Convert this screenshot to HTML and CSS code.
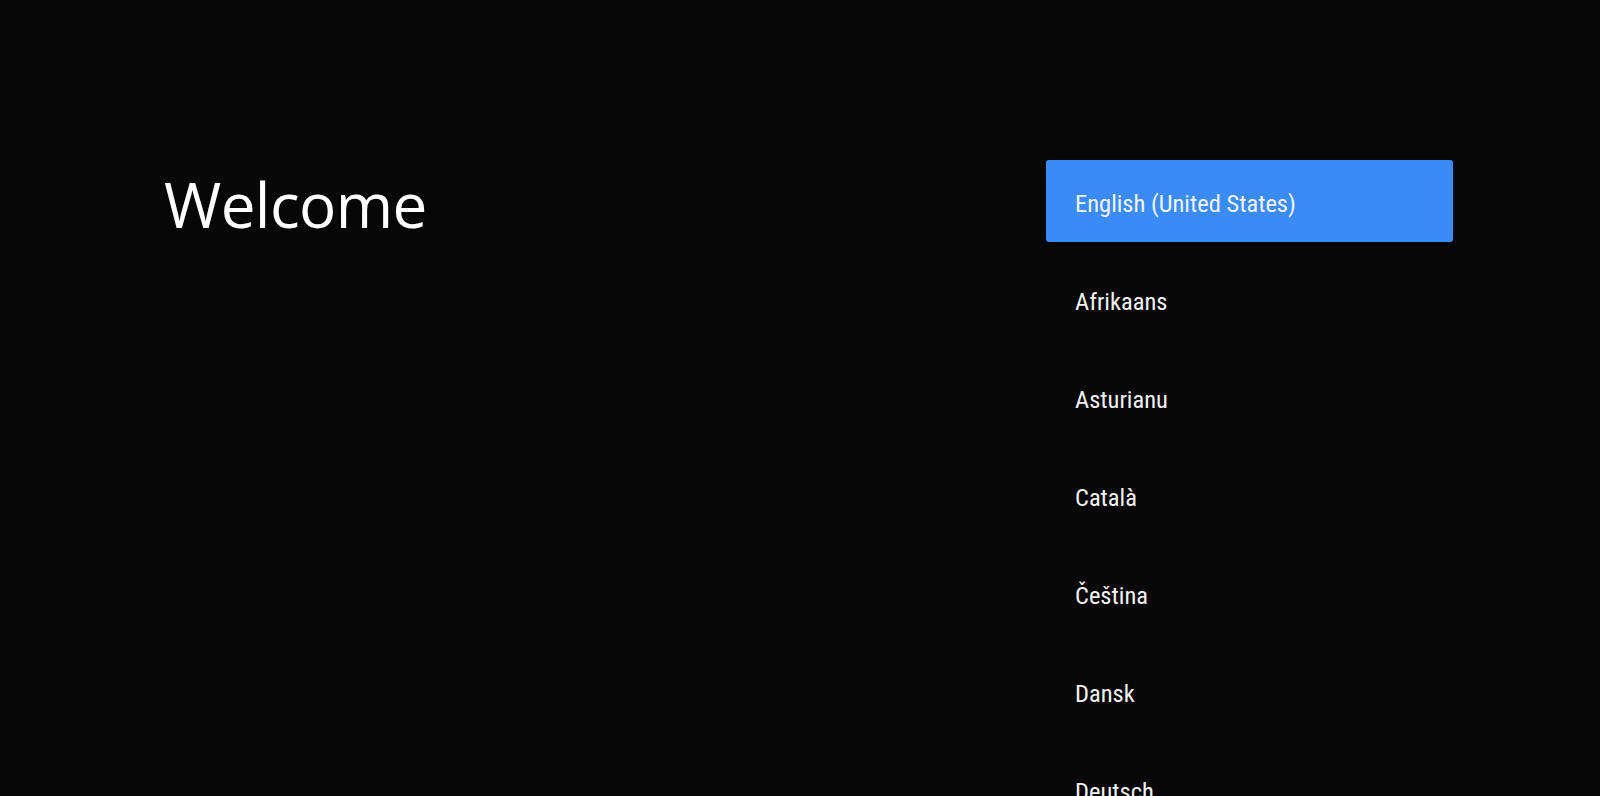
FILE: index.html
```html
<!DOCTYPE html>
<html lang="en">
  <head>
    <meta charset="UTF-8" />
    <meta name="viewport" content="width=device-width, initial-scale=1.0" />
    <title>Welcome</title>
    <link rel="stylesheet" href="styles.css">
  </head>
  <body>
    <div class="left">
      <h1 class="title">Welcome</h1>
    </div>
    <div class="right">
      <ul class="lang-list">
        <li class="lang selected">English (United States)</li>
        <li class="lang">Afrikaans</li>
        <li class="lang">Asturianu</li>
        <li class="lang">Català</li>
        <li class="lang">Čeština</li>
        <li class="lang">Dansk</li>
        <li class="lang">Deutsch</li>
      </ul>
    </div>
  </body>
</html>
```

FILE: styles.css
```css
body {
  height: 100vh;
  margin: 0;
  background-color: #070707;
  overflow: hidden;
  display: flex;
  color: #fff;
}
.left {
  width: 1046px;
  padding-left: 164px;
  box-sizing: border-box;
}
.title {
  margin: 168px 0 0;
  font-family: "Open Sans", sans-serif;
  font-weight: 400;
  font-size: 62px;
  line-height: 72px;
  letter-spacing: -0.6px;
}
.right {
  width: 407px;
  padding-top: 160px;
}
.lang-list {
  list-style: none;
  margin: 0;
  padding: 0;
  display: flex;
  flex-direction: column;
  gap: 16px;
}
.lang {
  height: 82px;
  box-sizing: border-box;
  display: flex;
  align-items: center;
  padding: 4px 0 0 29px;
  border-radius: 3px;
  font-family: Roboto, sans-serif;
  font-stretch: condensed;
  font-size: 24.5px;
  color: #f4f4f4;
}
.lang.selected {
  background-color: #3a8bf5;
}
```
